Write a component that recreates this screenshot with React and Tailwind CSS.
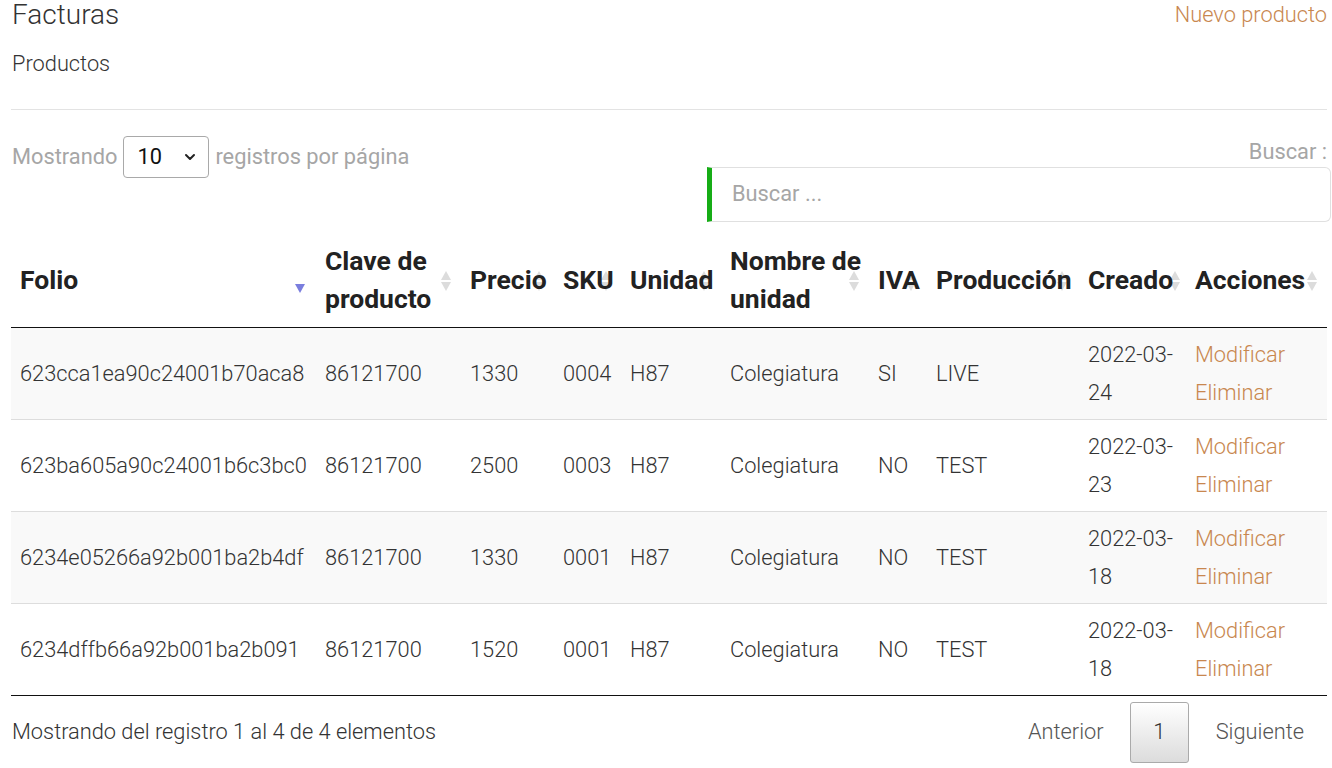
import React from 'react';
import { ChevronDown } from 'lucide-react';

const columns = [
  { label: 'Folio', width: 'w-[305px]', arrow: 'right-[11px]', sorted: true },
  { label: ['Clave de', 'producto'], width: 'w-[145px]', arrow: 'right-[10px]' },
  { label: 'Precio', width: 'w-[93px]', arrow: 'right-[10px]' },
  { label: 'SKU', width: 'w-[67px]', arrow: 'right-[10px]' },
  { label: 'Unidad', width: 'w-[100px]', arrow: 'right-[12px]' },
  { label: ['Nombre de', 'unidad'], width: 'w-[148px]', arrow: 'right-[10px]' },
  { label: 'IVA', width: 'w-[58px]', arrow: 'right-[11px]' },
  { label: 'Producción', width: 'w-[152px]', arrow: 'right-[12px]' },
  { label: 'Creado', width: 'w-[107px]', arrow: 'right-[6px]' },
  { label: 'Acciones', width: 'w-[141px]', arrow: 'right-[10px]' },
];

const rows = [
  { folio: '623cca1ea90c24001b70aca8', clave: '86121700', precio: '1330', sku: '0004', unidad: 'H87', nombre: 'Colegiatura', iva: 'SI', prod: 'LIVE', creado: ['2022-03-', '24'] },
  { folio: '623ba605a90c24001b6c3bc0', clave: '86121700', precio: '2500', sku: '0003', unidad: 'H87', nombre: 'Colegiatura', iva: 'NO', prod: 'TEST', creado: ['2022-03-', '23'] },
  { folio: '6234e05266a92b001ba2b4df', clave: '86121700', precio: '1330', sku: '0001', unidad: 'H87', nombre: 'Colegiatura', iva: 'NO', prod: 'TEST', creado: ['2022-03-', '18'] },
  { folio: '6234dffb66a92b001ba2b091', clave: '86121700', precio: '1520', sku: '0001', unidad: 'H87', nombre: 'Colegiatura', iva: 'NO', prod: 'TEST', creado: ['2022-03-', '18'] },
];

const SortIcon = ({ sorted }) => (
  <svg width="10" height="22" viewBox="0 0 10 22" className="block">
    {!sorted && <polygon points="5,1 10,10 0,10" fill="#dcdcdc" />}
    <polygon points="0,12 10,12 5,21" fill={sorted ? '#7a7ede' : '#dcdcdc'} />
  </svg>
);

const Cell = ({ children, className = '' }) => (
  <td className={`px-[9px] py-[8px] align-middle leading-[37.5px] ${className}`}>{children}</td>
);

export default function App() {
  return (
    <div className="min-h-screen bg-white pl-[11px] pr-[5px] font-['Roboto',sans-serif] text-[#333]">
      <div className="flex items-center justify-between pl-[1px]">
        <h1 className="text-[28px] font-light leading-[30px]">Facturas</h1>
        <a className="text-[21.8px] font-light leading-[30px] text-[#c8874f]">Nuevo producto</a>
      </div>
      <div className="mt-[19px] pl-[1px] text-[21.8px] font-light leading-[30px]">Productos</div>
      <hr className="mt-[30px] border-t border-[#e3e3e3]" />

      <div className="mt-[26px] flex items-start justify-between">
        <div className="flex items-center pl-[1px] text-[21.8px] leading-[42px] text-[#a6a6a6]">
          <span>Mostrando</span>
          <div className="mx-[6px] flex h-[42px] w-[86px] items-center justify-between rounded-[4px] border border-[#a9a9a9] pl-[13px] pr-[10px] text-[#111]">
            <span>10</span>
            <ChevronDown size={16} strokeWidth={3} className="text-[#222]" />
          </div>
          <span>registros por página</span>
        </div>
        <div className="flex flex-col items-end pt-[4px]">
          <span className="text-[21.8px] leading-[24px] text-[#a6a6a6]">Buscar :</span>
          <div className="mr-[-4px] mt-[3px] flex h-[55px] w-[624px] items-center rounded-r-[6px] border border-l-[5px] border-[#e0e0e0] border-l-[#16ad16] pl-[20px] text-[21.8px] text-[#a6a6a6]">
            Buscar ...
          </div>
        </div>
      </div>

      <table className="mt-[12px] w-[1316px] table-fixed border-collapse text-left">
        <thead>
          <tr className="border-b border-[#111]">
            {columns.map((c, i) => (
              <th key={i} className={`${c.width} relative px-[9px] pt-[8px] pb-[9px] align-middle text-[26.5px] font-bold leading-[38px] text-[#222]`}>
                <div className="relative z-10 whitespace-nowrap">
                  {Array.isArray(c.label) ? (
                    <>
                      <div>{c.label[0]}</div>
                      <div>{c.label[1]}</div>
                    </>
                  ) : (
                    c.label
                  )}
                </div>
                <span className={`absolute ${c.arrow} top-1/2 -translate-y-1/2 ${c.sorted ? 'mt-[2px]' : ''}`}>
                  <SortIcon sorted={c.sorted} />
                </span>
              </th>
            ))}
          </tr>
        </thead>
        <tbody className="text-[21.8px] font-light">
          {rows.map((r, i) => (
            <tr key={i} className={`border-b ${i === rows.length - 1 ? 'border-[#111]' : 'border-[#dddddd]'} ${i % 2 === 0 ? 'bg-[#f9f9f9]' : 'bg-white'}`}>
              <Cell className="whitespace-nowrap">{r.folio}</Cell>
              <Cell>{r.clave}</Cell>
              <Cell>{r.precio}</Cell>
              <Cell>{r.sku}</Cell>
              <Cell>{r.unidad}</Cell>
              <Cell>{r.nombre}</Cell>
              <Cell>{r.iva}</Cell>
              <Cell>{r.prod}</Cell>
              <Cell>
                <div>{r.creado[0]}</div>
                <div>{r.creado[1]}</div>
              </Cell>
              <Cell className="text-[#c8874f]">
                <div>Modificar</div>
                <div>Eliminar</div>
              </Cell>
            </tr>
          ))}
        </tbody>
      </table>

      <div className="mt-[6px] flex items-center justify-between">
        <span className="pl-[1px] text-[21.8px] font-light">Mostrando del registro 1 al 4 de 4 elementos</span>
        <div className="flex items-center text-[21.8px] font-light text-[#555]">
          <span className="pr-[26px]">Anterior</span>
          <span className="flex h-[61px] w-[59px] items-center justify-center rounded-[3px] border border-[#aaaaaa] bg-gradient-to-b from-white to-[#dcdcdc] text-[#333]">
            1
          </span>
          <span className="pl-[27px] pr-[23px]">Siguiente</span>
        </div>
      </div>
    </div>
  );
}
